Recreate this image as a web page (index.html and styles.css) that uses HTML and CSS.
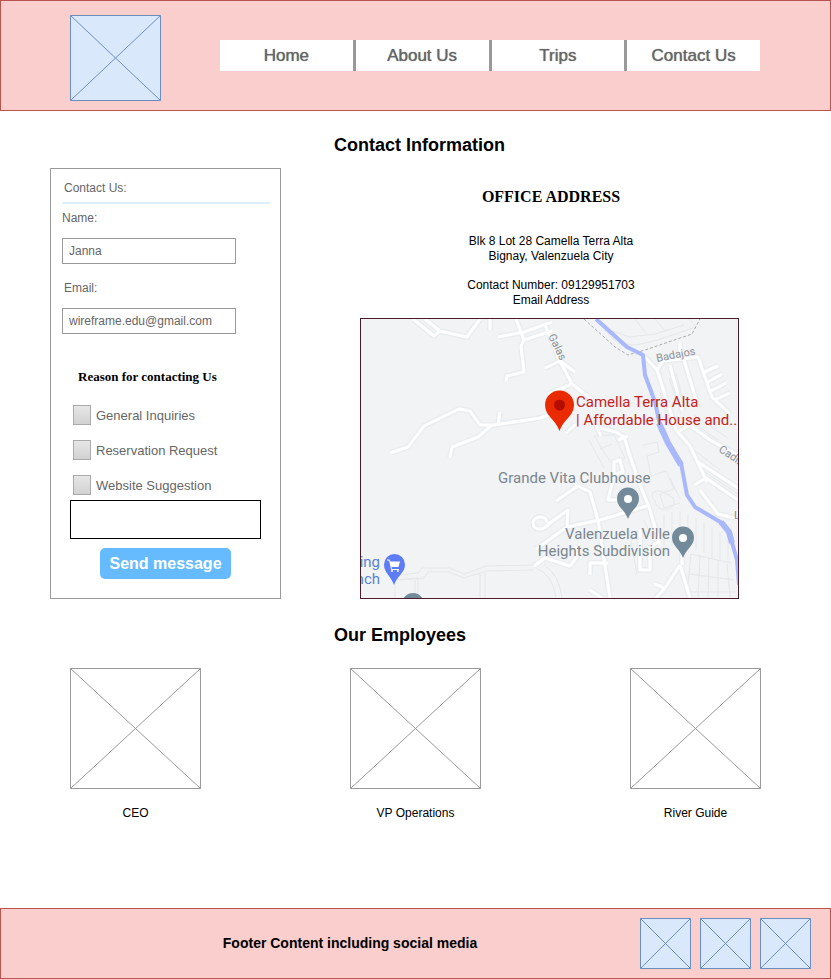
FILE: index.html
```html
<!DOCTYPE html>
<html lang="en">
<head>
<meta charset="utf-8">
<meta name="viewport" content="width=device-width, initial-scale=1">
<title>Contact Information</title>
<link rel="stylesheet" href="styles.css">
</head>
<body>
<header class="site-header">
  <svg class="placeholder tinted logo" viewBox="0 0 91 86" role="img" aria-label="Logo"><path d="M.5 .5H90.5V85.5H.5ZL90.5 85.5M90.5 .5L.5 85.5"/></svg>
  <nav class="main-nav">
    <a href="#">Home</a>
    <a href="#">About Us</a>
    <a href="#">Trips</a>
    <a href="#">Contact Us</a>
  </nav>
</header>

<main>
  <h2 class="section-title">Contact Information</h2>
  <div class="contact">
    <form class="contact-form">
      <p class="form-title">Contact Us:</p>
      <div class="field">
        <label for="name">Name:</label>
        <input type="text" id="name" value="Janna">
      </div>
      <div class="field">
        <label class="inset" for="email">Email:</label>
        <input type="text" id="email" value="wireframe.edu@gmail.com">
      </div>
      <fieldset class="reasons">
        <legend>Reason for contacting Us</legend>
        <label><input type="checkbox">General Inquiries</label>
        <label><input type="checkbox">Reservation Request</label>
        <label><input type="checkbox">Website Suggestion</label>
      </fieldset>
      <textarea class="message" aria-label="Message"></textarea>
      <button type="button" class="send">Send message</button>
    </form>

    <section class="office">
      <h3>OFFICE ADDRESS</h3>
      <p>Blk 8 Lot 28 Camella Terra Alta<br>Bignay, Valenzuela City</p>
      <p>Contact Number: 09129951703<br>Email Address</p>
      <svg class="map" viewBox="361 319 377 279" role="img" aria-label="Map of the office">
        <defs>
          <g id="roads">
            <path d="M390 453L408 447L424 426L459 409L470 411L480 425L494 425L540 418L552 414"/>
            <path d="M498 425L500 412M492 425L478 437L452 447L450 458M566 433L576 424"/>
            <path d="M413 319L434 336L440 331L467 337L480 319M440 331L425 319M490 319V330"/>
            <path d="M516 319L524 340L521 346L524 372L507 376L506 381M524 340L552 331M498 337L524 332L552 322"/>
            <path d="M545 368L560 361L572 384L548 394M572 384L590 398L600 408M575 372L560 361M545 325L560 361"/>
            <path d="M600 428L616 432L624 437L636 474L650 510L660 545"/>
            <path d="M596 425L601 436M618 440L628 436"/>
            <path d="M556 501L578 486L590 492L594 506L598 520L610 598M578 486L572 480"/>
            <path d="M536 549L567 527L600 520L650 505M567 527L568 510L550 523C544 531 533 531 533 523C534 515 547 515 547 523"/>
            <path d="M534 566L545 558L570 566L577 557L575 546M590 575V563H608M590 590L602 598"/>
            <path d="M614 476L608 500L620 500M614 462L620 460L623 472L614 475Z"/>
            <path d="M640 530V570H650V548L660 540"/>
            <path d="M680 565L665 588L656 598M665 588L654 584M680 565L690 598M682 552V565"/>
            <path d="M645 357L657 370L670 410L676 430L690 446L707 482"/>
            <path d="M657 370L663 361L698 357L712 397L730 414M680 343V357M670 365L682 410M684 360L696 400"/>
            <path d="M704 372L718 366M708 382L722 374M711 391L726 383M714 400L730 393"/>
            <path d="M677 432L690 425L710 440L738 455M698 462L738 488M694 485L706 478L738 500M700 490L718 514L735 518"/>
          </g>
        </defs>
        <path class="land" d="M361 319H738V598H361Z"/>
        <g class="blocks">
          <path d="M604 330L618 343L636 345L658 340L696 327L690 319M612 331L630 337L655 334L684 325M635 319L646 333M655 319L666 332"/>
          <path d="M669 378L681 414M676 373L686 411M690 376L700 408M660 392L668 420M688 419L718 440M694 415L728 438M685 443L720 470M702 470L738 494"/>
          <path d="M589 440L604 468M594 436L611 463L625 458L614 435ZM612 444L600 449M643 445L657 442L659 452L647 456L651 476L666 471L674 489L660 494L664 508L680 503"/>
          <path d="M670 478L680 499M654 500C648 493 657 487 666 494C679 497 675 512 662 509C654 507 657 502 654 500"/>
          <path d="M664 514V546M672 512V546M680 511V532M688 514V532M696 518V550M704 522V553M712 528V558M720 532V560M728 540V562"/>
          <path d="M691 554L687 596M700 555L698 597M709 557L708 597M718 560V597M727 564L730 597M691 554L731 563M689 574L734 580M687 592H736"/>
          <path d="M395 598V580L418 578V598M415 598V580M480 598V573M485 598V573M536 568Q553 575 556 598M544 565Q559 574 562 598"/>
          <path d="M400 575L418 573L422 568H450L464 574L486 566L534 565M400 580L424 578L428 572H449L464 578L487 571L534 570"/>
          <path d="M560 565L578 561L580 548M630 535L637 575M644 520L654 542"/>
        </g>
        <use href="#roads" class="road-edge"/>
        <use href="#roads" class="road"/>
        <path class="boundary" d="M584 319L615 347L628 355L645 350L692 334L700 319"/>
        <path class="river" d="M596 319L627 347L643 355L645 375L655 402L661 430L668 443L681 463L687 495L695 507L722 523L729 532L737 560L739 585"/>
        <path class="river wide" d="M659 423L668 443L681 465M721 522L729 532L732 543"/>
        <g class="street">
          <text transform="translate(548 336) rotate(64)">Galas</text>
          <text transform="translate(657 362) rotate(-11)">Badajos</text>
          <text transform="translate(718 451) rotate(34)">Cadiz</text>
          <text x="734" y="519">L</text>
        </g>
        <g class="pin-main">
          <path d="M559.500 431C556 420 545 416 545 405A14.500 14.500 0 0 1 574 405C574 416 563 420 559.500 431Z"/>
          <circle cx="559.500" cy="405" r="5.500"/>
          <text x="576" y="407">Camella Terra Alta</text>
          <text x="576" y="425">| Affordable House and..</text>
        </g>
        <g class="pin">
          <path d="M628 519C625 510 617 507 617 498.500A11 11 0 0 1 639 498.500C639 507 631 510 628 519Z"/>
          <circle cx="628" cy="499" r="4"/>
          <path d="M683 558C680 549 672 546 672 537.500A11 11 0 0 1 694 537.500C694 546 686 549 683 558Z"/>
          <circle cx="683" cy="538" r="4"/>
          <path d="M402 604A11 11 0 0 1 424 604Z"/>
          <text x="498" y="483">Grande Vita Clubhouse</text>
          <text x="670" y="539" text-anchor="end">Valenzuela Ville</text>
          <text x="670" y="556" text-anchor="end">Heights Subdivision</text>
        </g>
        <g class="pin-shop">
          <path d="M394 585C391 576 384 573 384 564.500A10.500 10.500 0 0 1 405 564.500C405 573 397 576 394 585Z"/>
          <path class="cart" d="M389.500 561.500H400L398.500 567H391.500Z"/>
          <path class="cart-line" d="M387 560H389.500L391.500 569.500H399"/>
          <circle class="cart" cx="392" cy="571" r="1"/><circle class="cart" cx="398" cy="571" r="1"/>
          <text x="380" y="567" text-anchor="end">ing</text>
          <text x="380" y="584" text-anchor="end">nch</text>
        </g>
      </svg>
    </section>
  </div>

  <h2 class="section-title">Our Employees</h2>
  <div class="employees">
    <figure>
      <svg class="placeholder" viewBox="0 0 131 121" aria-hidden="true"><path d="M.5 .5H130.500V120.500H.5ZL130.500 120.500M130.500 .5L.5 120.500"/></svg>
      <figcaption>CEO</figcaption>
    </figure>
    <figure>
      <svg class="placeholder" viewBox="0 0 131 121" aria-hidden="true"><path d="M.5 .5H130.500V120.500H.5ZL130.500 120.500M130.500 .5L.5 120.500"/></svg>
      <figcaption>VP Operations</figcaption>
    </figure>
    <figure>
      <svg class="placeholder" viewBox="0 0 131 121" aria-hidden="true"><path d="M.5 .5H130.500V120.500H.5ZL130.500 120.500M130.500 .5L.5 120.500"/></svg>
      <figcaption>River Guide</figcaption>
    </figure>
  </div>
</main>

<footer class="site-footer">
  <p>Footer Content including social media</p>
  <svg class="placeholder tinted social" viewBox="0 0 51 51" aria-hidden="true"><path d="M.5 .5H50.500V50.500H.5ZL50.500 50.500M50.500 .5L.5 50.500"/></svg>
  <svg class="placeholder tinted social" viewBox="0 0 51 51" aria-hidden="true"><path d="M.5 .5H50.500V50.500H.5ZL50.500 50.500M50.500 .5L.5 50.500"/></svg>
  <svg class="placeholder tinted social" viewBox="0 0 51 51" aria-hidden="true"><path d="M.5 .5H50.500V50.500H.5ZL50.500 50.500M50.500 .5L.5 50.500"/></svg>
</footer>
</body>
</html>
```
FILE: styles.css
```css
* {
  box-sizing: border-box;
}

body {
  margin: 0;
  min-height: 100vh;
  display: flex;
  flex-direction: column;
  background: #fff;
  color: #000;
  font: 12px/15px "Liberation Sans", Arial, sans-serif;
}

main {
  flex: 1;
}

p, h2, h3, figure {
  margin: 0;
}

/* Header and footer bars */
.site-header,
.site-footer {
  display: flex;
  background: #f9cecc;
  border: 1px solid #b85450;
}

.site-header {
  gap: 59px;
  padding: 14px 70px 9px 69px;
}

.logo {
  width: 91px;
  flex: none;
}

.main-nav {
  flex: 1;
  display: flex;
  align-self: center;
  margin-bottom: 5px;
  background: #fff;
}

.main-nav a {
  flex: 1;
  border-right: 3px solid #999;
  color: #666;
  font-size: 17px;
  line-height: 31px;
  text-align: center;
  text-decoration: none;
  text-shadow: 0 0 1px #666;
}

.main-nav a:last-child {
  border-right: 0;
}

.site-footer {
  align-items: center;
  gap: 9px;
  padding: 9px 19px;
}

.site-footer p {
  flex: 1;
  padding-left: 49px;
  font-size: 14px;
  font-weight: bold;
  text-align: center;
}

.social {
  width: 51px;
}

/* Crossed boxes that stand in for pictures */
.placeholder {
  display: block;
  fill: #fff;
  stroke: #999;
}

.tinted {
  fill: #dae8fc;
  stroke: #6c8ebf;
}

.section-title {
  padding: 24px 0 13px 334px;
  font-size: 18px;
  line-height: 20px;
}

/* Contact form */
.contact {
  display: flex;
  align-items: stretch;
  gap: 79px;
  padding: 0 92px 2px 50px;
}

.contact-form {
  flex: none;
  width: 231px;
  padding: 0 10px 19px 11px;
  border: 1px solid #999;
  color: #666;
}

.form-title {
  padding: 12px 2px 6px;
  border-bottom: 2px solid #ddeeff;
}

.field {
  height: 70px;
  padding-top: 7px;
}

.field label {
  display: block;
  margin-bottom: 12px;
}

.field .inset {
  padding-left: 2px;
}

.field input {
  display: block;
  width: 174px;
  height: 26px;
  padding: 0 6px;
  border: 1px solid #999;
  background: #fff;
  color: #666;
  font: inherit;
}

.reasons {
  display: grid;
  gap: 15px;
  margin: 25px 0 0;
  padding: 0 0 0 11px;
  border: 0;
  font-size: 13px;
}

.reasons legend {
  margin-bottom: 21px;
  padding: 0 5px;
  color: #000;
  font: bold 13px/15px "Liberation Serif", "Times New Roman", serif;
}

.reasons label {
  display: flex;
  align-items: center;
  gap: 5px;
  height: 20px;
}

.reasons input {
  appearance: none;
  width: 18px;
  height: 20px;
  margin: 0;
  border: 1px solid #aaa;
  background: linear-gradient(#e6e6e6, #d2d2d2);
}

.message {
  display: block;
  width: 191px;
  height: 39px;
  margin: 5px 0 9px 8px;
  border: 1px solid #000;
  background: #fff;
  resize: none;
}

.send {
  display: block;
  width: 131px;
  height: 31px;
  margin-left: 38px;
  padding: 0;
  border: 0;
  border-radius: 5px;
  background: #66bbff;
  color: #fff;
  font: bold 16px/31px "Liberation Sans", Arial, sans-serif;
}

/* Office address and map */
.office {
  flex: 1;
  text-align: center;
}

.office h3,
.office p {
  padding-left: 3px;
}

.office h3 {
  padding-top: 19px;
  margin-bottom: 27px;
  font: bold 16px/20px "Liberation Serif", "Times New Roman", serif;
}

.office p {
  margin-bottom: 14px;
}

.map {
  display: block;
  width: 100%;
  margin-top: -4px;
  border: 1px solid #4a1c2a;
  font: 15px Roboto, sans-serif;
}

.land {
  fill: #f1f3f4;
}

.blocks,
.road,
.road-edge,
.boundary,
.river {
  fill: none;
  stroke-linejoin: round;
}

.blocks {
  stroke: #e5e8ea;
  stroke-width: 1px;
}

.road-edge {
  stroke: #eaedef;
  stroke-width: 6px;
}

.road {
  stroke: #fff;
  stroke-width: 3px;
}

.boundary {
  stroke: #aaa;
  stroke-dasharray: 3 2;
}

.river {
  stroke: #a9b8fb;
  stroke-width: 4px;
}

.wide {
  stroke-width: 6px;
}

.street {
  fill: #8d9196;
  font-size: 11px;
}

.pin-main {
  fill: #ea2a00;
}

.pin-main circle {
  fill: #b50c00;
}

.pin-main text {
  fill: #c5221f;
}

.pin {
  fill: #738a9b;
}

.pin circle {
  fill: #fff;
}

.pin text {
  fill: #7b868e;
}

.pin-shop {
  fill: #5f7cf7;
}

.pin-shop text {
  fill: #5b7fd0;
}

.pin-shop .cart {
  fill: #fff;
}

.pin-shop .cart-line {
  fill: none;
  stroke: #fff;
}

/* Employees */
.employees {
  display: flex;
  justify-content: space-between;
  padding: 10px 70px 40px;
}

.employees figure {
  width: 131px;
}

.employees figcaption {
  margin-top: 17px;
  text-align: center;
}
```
